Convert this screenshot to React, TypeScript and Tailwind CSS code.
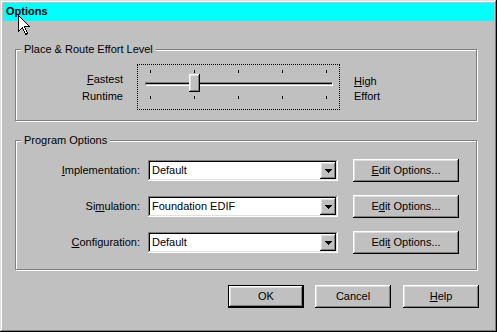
import React from "react";

const U = ({ children }: { children: React.ReactNode }) => (
  <span className="underline decoration-1 underline-offset-[1px]">{children}</span>
);

const Raised = ({
  children,
  className = "",
}: {
  children?: React.ReactNode;
  className?: string;
}) => (
  <div
    className={
      "flex items-center justify-center bg-[#c0c0c0] shadow-[inset_-1px_-1px_#000,inset_1px_1px_#fff,inset_-2px_-2px_#808080,inset_2px_2px_#dfdfdf] " +
      className
    }
  >
    {children}
  </div>
);

const Combo = ({ value }: { value: string }) => (
  <div className="ml-[8px] flex h-[21px] w-[190px] bg-white p-[2px] shadow-[inset_-1px_-1px_#fff,inset_1px_1px_#808080,inset_-2px_-2px_#dfdfdf,inset_2px_2px_#000]">
    <div className="flex-1 pl-[2px] leading-[17px] text-black">{value}</div>
    <Raised className="h-[17px] w-[16px]">
      <svg width="7" height="4" viewBox="0 0 7 4" shapeRendering="crispEdges">
        <polygon points="0,0 7,0 3.5,4" fill="#000" />
      </svg>
    </Raised>
  </div>
);

const Row = ({
  label,
  value,
  btn,
}: {
  label: React.ReactNode;
  value: string;
  btn: React.ReactNode;
}) => (
  <div className="flex items-center">
    <div className="w-[124px] text-right leading-[17px]">{label}</div>
    <Combo value={value} />
    <Raised className="ml-[15px] h-[23px] w-[106px] leading-[17px]">
      <span>{btn}</span>
    </Raised>
  </div>
);

const Ticks = () => (
  <div className="ml-[12px] flex w-[177px] justify-between">
    {[0, 1, 2, 3, 4].map((i) => (
      <div key={i} className="h-[3px] w-[1px] bg-black" />
    ))}
  </div>
);

export default function App() {
  return (
    <div className="relative h-[332px] w-[497px] bg-[#c0c0c0] p-[3px] font-['Liberation_Sans',Arial,sans-serif] text-[11px] text-black shadow-[inset_-1px_-1px_#000,inset_1px_1px_#dfdfdf,inset_-2px_-2px_#808080,inset_2px_2px_#fff]">
      {/* title bar */}
      <div className="h-[18px] bg-[#00ffff] pl-[3px] font-bold leading-[16px]">Options</div>

      {/* group 1 */}
      <div className="ml-[12px] mt-[28px] flex h-[72px] w-[462px] flex-col border border-[#808080] shadow-[inset_1px_1px_#fff,1px_1px_#fff]">
        <span className="-mt-[7px] ml-[5px] self-start bg-[#c0c0c0] px-[3px] leading-[13px]">
          Place &amp; Route Effort Level
        </span>
        <div className="mt-[8px] flex items-start">
          <div className="mt-[7px] w-[107px] text-right leading-[17px]">
            <div>
              <U>F</U>astest
            </div>
            <div>Runtime</div>
          </div>
          <div className="ml-[14px] h-[46px] w-[203px] border border-dotted border-black pt-[5px]">
            <Ticks />
            <div className="relative ml-[7px] mt-[9px] h-[4px] w-[188px] border-b border-l border-r border-t border-b-white border-l-[#808080] border-r-white border-t-[#808080]">
              <div className="h-[1px] bg-black" />
              <Raised className="absolute left-[43px] top-[-9px] h-[18px] w-[11px]" />
            </div>
            <div className="mt-[10px]">
              <Ticks />
            </div>
          </div>
          <div className="ml-[14px] mt-[10px] leading-[15px]">
            <div>
              <U>H</U>igh
            </div>
            <div>Effort</div>
          </div>
        </div>
      </div>

      {/* group 2 */}
      <div className="ml-[12px] mt-[19px] flex h-[130px] w-[462px] flex-col border border-[#808080] shadow-[inset_1px_1px_#fff,1px_1px_#fff]">
        <span className="-mt-[7px] ml-[5px] self-start bg-[#c0c0c0] px-[3px] leading-[13px]">
          Program Options
        </span>
        <div className="mt-[12px] flex flex-col gap-[13px]">
          <Row
            label={
              <>
                <U>I</U>mplementation:
              </>
            }
            value="Default"
            btn={
              <>
                <U>E</U>dit Options...
              </>
            }
          />
          <Row
            label={
              <>
                Si<U>m</U>ulation:
              </>
            }
            value="Foundation EDIF"
            btn={
              <>
                E<U>d</U>it Options...
              </>
            }
          />
          <Row
            label={
              <>
                <U>C</U>onfiguration:
              </>
            }
            value="Default"
            btn={
              <>
                Edi<U>t</U>{" "}Options...
              </>
            }
          />
        </div>
      </div>

      {/* buttons */}
      <div className="mt-[15px] flex justify-end pr-[15px]">
        <div className="h-[23px] w-[76px] border border-black">
          <Raised className="h-full w-full leading-[17px]">OK</Raised>
        </div>
        <Raised className="ml-[11px] h-[23px] w-[76px] leading-[17px]">Cancel</Raised>
        <Raised className="ml-[12px] h-[23px] w-[76px] leading-[17px]">
          <span>
            <U>H</U>elp
          </span>
        </Raised>
      </div>

      {/* mouse cursor */}
      <svg
        className="absolute left-[18px] top-[15px]"
        width="13"
        height="21"
        viewBox="0 0 13 21"
        shapeRendering="crispEdges"
      >
        <polygon
          points="0.5,0.5 0.5,16.5 4.5,12.5 7.5,19.5 9.5,18.5 6.5,11.5 11.5,11.5"
          fill="#fff"
          stroke="#000"
          strokeWidth="1"
        />
      </svg>
    </div>
  );
}
